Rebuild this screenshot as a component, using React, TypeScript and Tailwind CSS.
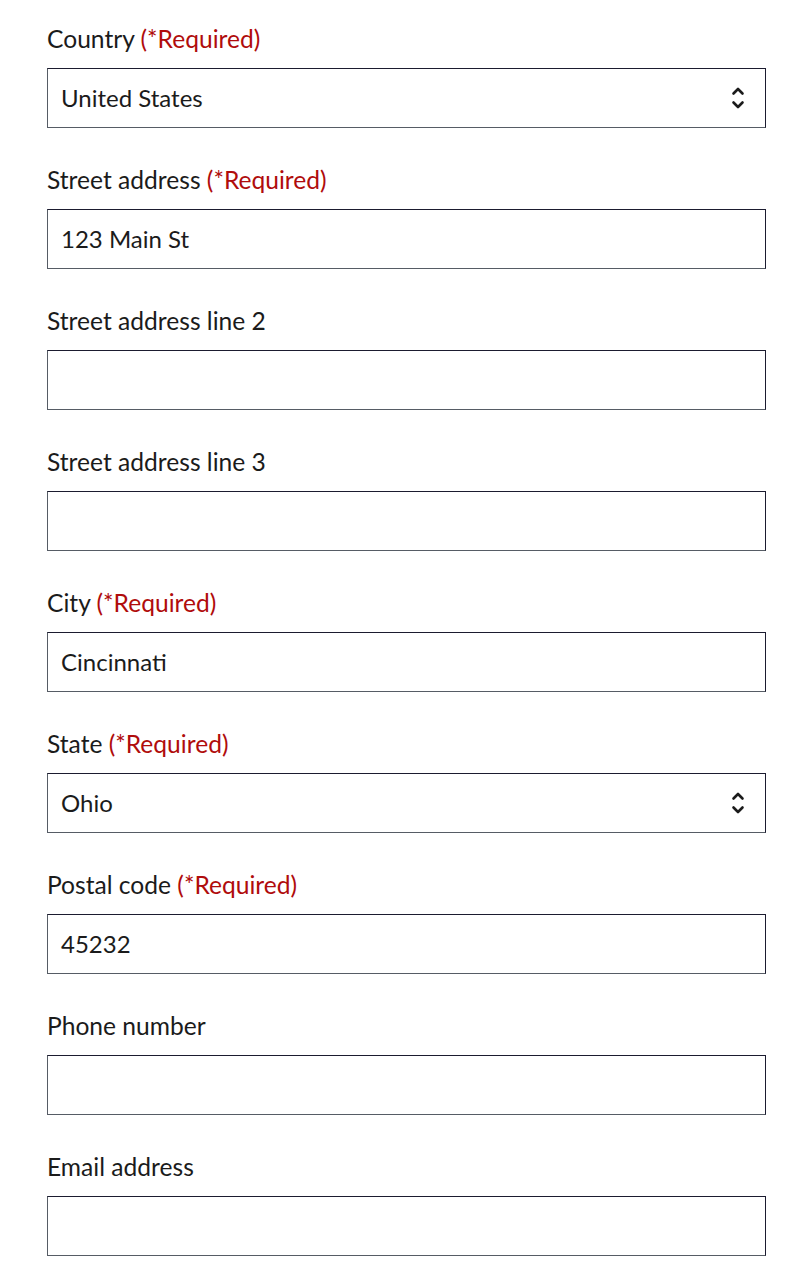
import React from 'react'

type Field = {
  label: string
  required?: boolean
  value?: string
  select?: boolean
}

const fields: Field[] = [
  { label: 'Country', required: true, value: 'United States', select: true },
  { label: 'Street address', required: true, value: '123 Main St' },
  { label: 'Street address line 2' },
  { label: 'Street address line 3' },
  { label: 'City', required: true, value: 'Cincinnati' },
  { label: 'State', required: true, value: 'Ohio', select: true },
  { label: 'Postal code', required: true, value: '45232' },
  { label: 'Phone number' },
  { label: 'Email address' },
]

function Chevrons() {
  return (
    <svg width="14" height="26" viewBox="0 0 14 26" fill="none" stroke="#1b1b1b" strokeWidth={2.6} strokeLinecap="round" strokeLinejoin="round">
      <path d="M2.5 8.5 7 4l4.5 4.5" />
      <path d="M2.5 17.5 7 22l4.5-4.5" />
    </svg>
  )
}

export default function App() {
  return (
    <div className="min-h-[1281px] bg-white px-[47px] pt-[24px] text-[#1b1b1b] font-['Lato',sans-serif]">
      {fields.map((f) => (
        <div key={f.label} className="mb-[37px]">
          <label className="block text-[24.6px] leading-[30px]">
            {f.label}
            {f.required && <span className="text-[#b00c0c]"> (*Required)</span>}
          </label>
          <div className="mt-[14px] flex h-[60px] w-[719px] items-center justify-between border border-[#565c65] border-t-[#1b1b2f] border-r-[#1b1b2f] pl-[13px] pr-[20px] text-[24px]">
            <span>{f.value ?? ''}</span>
            {f.select && <Chevrons />}
          </div>
        </div>
      ))}
    </div>
  )
}
